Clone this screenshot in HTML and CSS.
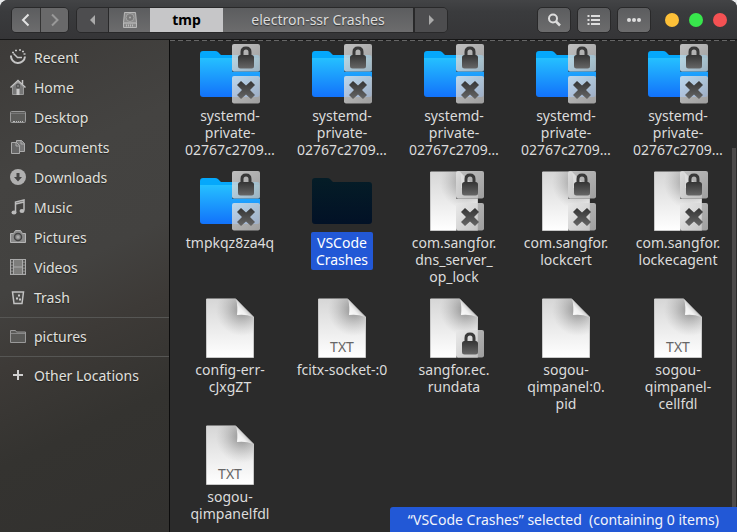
FILE: index.html
```
<!DOCTYPE html>
<html lang="en">
<head>
<meta charset="utf-8">
<title>electron-ssr Crashes</title>
<link rel="stylesheet" href="styles.css">
</head>
<body>
<svg class="defs" aria-hidden="true">
  <defs>
    <linearGradient id="blue" x1="0" y1="0" x2="0" y2="1"><stop offset="0" stop-color="#25c0ff"/><stop offset="1" stop-color="#1272fb"/></linearGradient>
    <linearGradient id="navy" x1="0" y1="0" x2="0" y2="1"><stop offset="0" stop-color="#051d27"/><stop offset="1" stop-color="#021126"/></linearGradient>
    <linearGradient id="paper" x1="0" y1="0" x2="0" y2="1"><stop offset="0" stop-color="#d6d6d6"/><stop offset="1" stop-color="#ffffff"/></linearGradient>
    <radialGradient id="shade" gradientUnits="userSpaceOnUse" cx="42" cy="12" r="26"><stop offset="0" stop-color="#555" stop-opacity=".6"/><stop offset=".5" stop-color="#777" stop-opacity=".3"/><stop offset="1" stop-color="#999" stop-opacity="0"/></radialGradient>
    <linearGradient id="curl" x1="0" y1="1" x2=".6" y2=".4"><stop offset="0" stop-color="#fff"/><stop offset=".6" stop-color="#f0f0f0"/><stop offset="1" stop-color="#bbb"/></linearGradient>
    <linearGradient id="tile" x1="0" y1="0" x2="1" y2="1"><stop offset="0" stop-color="#e8e8e8" stop-opacity=".78"/><stop offset="1" stop-color="#b4b4b4" stop-opacity=".84"/></linearGradient>
    <linearGradient id="ink" x1="0" y1="0" x2="0" y2="1"><stop offset="0" stop-color="#353535"/><stop offset="1" stop-color="#666"/></linearGradient>
    <symbol id="folder" viewBox="0 0 60 60">
      <path d="M0 10q0-3 3-3h12q2 0 3 1l3 3h36q3 0 3 3v36H0z" fill="#05a8fb"/>
      <path d="M0 14h60v36q0 3-3 3H3q-3 0-3-3z" fill="url(#blue)"/>
    </symbol>
    <symbol id="folder-selected" viewBox="0 0 60 60">
      <path d="M0 10q0-3 3-3h12q2 0 3 1l3 3h36q3 0 3 3v36q0 3-3 3H3q-3 0-3-3z" fill="url(#navy)"/>
    </symbol>
    <symbol id="file" viewBox="0 0 60 60">
      <path d="M6.500.500h29l18 18v41h-47z" fill="url(#paper)"/>
      <path d="M6.500.500h29l18 18v41h-47z" fill="url(#shade)"/>
      <path d="M36 1q2 7 1 16 9-1 16 2z" fill="url(#curl)"/>
      <path d="M6.500 1v58.500h47V19" fill="none" stroke="#c9c9c9"/>
    </symbol>
    <symbol id="lock" viewBox="0 0 28 28">
      <path d="M0 25.500q0 2.500 2 2.500h24q2 0 2-2V3" fill="none" stroke="#222" stroke-opacity=".7"/>
      <rect width="28" height="27.500" rx="2" fill="url(#tile)"/>
      <path d="M10 13V8q0-4 4-4t4 4v5" fill="none" stroke="#393939" stroke-width="3"/>
      <rect x="6" y="11" width="16" height="13.500" rx="2.500" fill="url(#ink)"/>
    </symbol>
    <symbol id="deny" viewBox="0 0 28 28">
      <path d="M0 25.500q0 2.500 2 2.500h24q2 0 2-2V3" fill="none" stroke="#222" stroke-opacity=".7"/>
      <rect width="28" height="27.500" rx="2" fill="url(#tile)"/>
      <path d="M9 5l5 4.500L19 5l4 4-5 5 5 5-4 4-5-4.500L9 23l-4-4 5-5-5-5z" fill="url(#ink)"/>
    </symbol>
  </defs>
</svg>
<div class="window">
  <header class="bar">
    <div class="group">
      <button class="btn nav" aria-label="Back"><svg width="12" height="14" viewBox="0 0 12 14"><path d="M8.500 1.500L3 7l5.500 5.500" fill="none" stroke="#e2e2e2" stroke-width="2"/></svg></button>
      <button class="btn nav" aria-label="Forward"><svg width="12" height="14" viewBox="0 0 12 14"><path d="M3 1.500L8.500 7 3 12.500" fill="none" stroke="#999" stroke-width="2"/></svg></button>
    </div>
    <nav class="group path" aria-label="Location">
      <button class="btn dim arrow" aria-label="Scroll left"><svg width="6" height="12" viewBox="0 0 6 12"><path d="M5 1v10L0 6z" fill="#aaa"/></svg></button>
      <button class="btn disk" aria-label="File system"><svg width="16" height="18" viewBox="0 0 16 18"><path d="M2.500 1.500h11l1 10v5h-13v-5z" fill="#8a8a8a" stroke="#b8b8b8"/><circle cx="8" cy="6.500" r="4" fill="#7a7a7a" stroke="#a5a5a5"/><circle cx="8" cy="6.500" r="1" fill="#b0b0b0"/><path d="M1.500 12h13" stroke="#c4c4c4"/><path d="M4.500 13.500v2m2-2v2m2-2v2m2-2v2" stroke="#bbb"/></svg></button>
      <button class="btn current">tmp</button>
      <button class="btn crumb">electron-ssr Crashes</button>
      <button class="btn dim arrow" aria-label="Scroll right"><svg width="6" height="12" viewBox="0 0 6 12"><path d="M1 1v10l5-5z" fill="#aaa"/></svg></button>
    </nav>
    <div class="tools">
      <button class="btn tool" aria-label="Search"><svg width="16" height="16" viewBox="0 0 16 16"><circle cx="7" cy="6.500" r="4" fill="none" stroke="#ddd" stroke-width="2"/><path d="M10 9.500l4 4" stroke="#ddd" stroke-width="2.500"/></svg></button>
      <button class="btn tool" aria-label="List view"><svg width="16" height="16" viewBox="0 0 16 16"><path d="M5 4h9M5 8h9M5 12h9" stroke="#ddd" stroke-width="2"/><path d="M1.500 4h2M1.500 8h2M1.500 12h2" stroke="#ddd" stroke-width="2"/></svg></button>
      <button class="btn tool" aria-label="Menu"><svg width="16" height="16" viewBox="0 0 16 16"><g fill="#ddd"><circle cx="3" cy="8" r="2"/><circle cx="8" cy="8" r="2"/><circle cx="13" cy="8" r="2"/></g></svg></button>
    </div>
    <div class="lights">
      <button class="light yellow" aria-label="Minimize"></button>
      <button class="light green" aria-label="Maximize"></button>
      <button class="light red" aria-label="Close"></button>
    </div>
  </header>
  <div class="body">
    <nav class="side" aria-label="Places">
      <a href="#"><svg viewBox="0 0 16 16"><path d="M1 6.500A7 7 0 1 0 15 7.500" fill="none" stroke="#c4c4c4" stroke-width="2"/><path d="M3.500 4.500L7.500 8.500H12" fill="none" stroke="#c4c4c4" stroke-width="1.500"/><path d="M2 3.500h2M5 1.500h2M9 1h2M12 2.500h2M13.500 5h2" stroke="#c4c4c4" stroke-width="1.500"/></svg>Recent</a>
      <a href="#"><svg viewBox="0 0 16 16"><path d="M2.500 8L8 3l5.500 5v7.500h-11z" fill="#777" stroke="#999"/><path d="M.5 8.500L8 1.500l7.500 7M12.500 1v4" fill="none" stroke="#c4c4c4" stroke-width="1.500"/><path d="M6.500 10h3v6h-3z" fill="#c9c9c9"/><path d="M6.500 5.500h3v3h-3z" fill="none" stroke="#555"/></svg>Home</a>
      <a href="#"><svg viewBox="0 0 16 16"><rect x=".5" y="2.500" width="15" height="11" rx="1" fill="#5c5c5a" stroke="#999"/><path d="M1 4.500h14" stroke="#777"/><path d="M3 12.500h2m1 0h1m1 0h1m1 0h1m1 0h1" stroke="#bbb"/></svg>Desktop</a>
      <a href="#"><svg viewBox="0 0 16 16"><path d="M6.500 1.500h5l3 3v8h-8z" fill="#777" stroke="#aaa"/><path d="M11 1v4h4" fill="none" stroke="#aaa"/><path d="M1.500 3.500h5l3 3v8h-8z" fill="#666" stroke="#aaa"/><path d="M6 3v4h4" fill="none" stroke="#aaa"/></svg>Documents</a>
      <a href="#"><svg viewBox="0 0 16 16"><circle cx="8" cy="8" r="8" fill="#b0b0b0"/><path d="M6.500 4h3v4H12l-4 4.500L4 8h2.500z" fill="#444"/></svg>Downloads</a>
      <a href="#"><svg viewBox="0 0 16 16"><path d="M5.500 13V3l8.500-2v10.500M5.500 5L14 3" fill="none" stroke="#bbb" stroke-width="1.500"/><ellipse cx="4" cy="13.500" rx="2.500" ry="2" fill="#bbb"/><ellipse cx="12" cy="12" rx="2.500" ry="2" fill="#bbb"/></svg>Music</a>
      <a href="#"><svg viewBox="0 0 16 16"><path d="M.5 4.500h3l2-3h5l2 3h3v9H.5z" fill="#8a8a8a" stroke="#b5b5b5"/><circle cx="8" cy="8" r="3.500" fill="#888" stroke="#444" stroke-width="1.500"/><circle cx="8" cy="8" r="1.500" fill="#aaa"/></svg>Pictures</a>
      <a href="#"><svg viewBox="0 0 16 16"><rect x=".5" y=".5" width="15" height="15" fill="#7d7d7b" stroke="#aaa"/><path d="M2 1v14M14 1v14" stroke="#444" stroke-width="1.500" stroke-dasharray="1.500 1.500"/><path d="M3.500 1v14M12.500 1v14M4 8h8" stroke="#aaa"/></svg>Videos</a>
      <a href="#"><svg viewBox="0 0 16 16"><path d="M2.500 3h11L12 14.500H4z" fill="#4c4c4a" stroke="#c2c2c2" stroke-width="1.500"/><path d="M8 5.500h2v2H8zm-2 3h2v2H6zm3 1h2v2H9z" fill="#c9c9c9"/></svg>Trash</a>
      <hr>
      <a href="#"><svg viewBox="0 0 16 16"><path d="M.5 2.500h5l1 1.500h9v10.500H.5z" fill="#5a5a58" stroke="#999"/><path d="M1 5.500h14" stroke="#888"/></svg>pictures</a>
      <hr>
      <a href="#"><svg viewBox="0 0 16 16"><path d="M8 3v10M3 8h10" stroke="#d0d0d0" stroke-width="2"/></svg>Other Locations</a>
    </nav>
    <main class="files">
      <div class="item"><svg class="pic" viewBox="0 0 60 60"><use href="#folder"/><use href="#lock" x="32" width="28" height="28"/><use href="#deny" x="32" y="32" width="28" height="28"/></svg><span class="name">systemd-<br>private-<br>02767c2709…</span></div>
      <div class="item"><svg class="pic" viewBox="0 0 60 60"><use href="#folder"/><use href="#lock" x="32" width="28" height="28"/><use href="#deny" x="32" y="32" width="28" height="28"/></svg><span class="name">systemd-<br>private-<br>02767c2709…</span></div>
      <div class="item"><svg class="pic" viewBox="0 0 60 60"><use href="#folder"/><use href="#lock" x="32" width="28" height="28"/><use href="#deny" x="32" y="32" width="28" height="28"/></svg><span class="name">systemd-<br>private-<br>02767c2709…</span></div>
      <div class="item"><svg class="pic" viewBox="0 0 60 60"><use href="#folder"/><use href="#lock" x="32" width="28" height="28"/><use href="#deny" x="32" y="32" width="28" height="28"/></svg><span class="name">systemd-<br>private-<br>02767c2709…</span></div>
      <div class="item"><svg class="pic" viewBox="0 0 60 60"><use href="#folder"/><use href="#lock" x="32" width="28" height="28"/><use href="#deny" x="32" y="32" width="28" height="28"/></svg><span class="name">systemd-<br>private-<br>02767c2709…</span></div>
      <div class="item"><svg class="pic" viewBox="0 0 60 60"><use href="#folder"/><use href="#lock" x="32" width="28" height="28"/><use href="#deny" x="32" y="32" width="28" height="28"/></svg><span class="name">tmpkqz8za4q</span></div>
      <div class="item"><svg class="pic" viewBox="0 0 60 60"><use href="#folder-selected"/></svg><span class="name selected">VSCode<br>Crashes</span></div>
      <div class="item"><svg class="pic" viewBox="0 0 60 60"><use href="#file"/><use href="#lock" x="32" width="28" height="28"/><use href="#deny" x="32" y="32" width="28" height="28"/></svg><span class="name">com.sangfor.<br>dns_server_<br>op_lock</span></div>
      <div class="item"><svg class="pic" viewBox="0 0 60 60"><use href="#file"/><use href="#lock" x="32" width="28" height="28"/><use href="#deny" x="32" y="32" width="28" height="28"/></svg><span class="name">com.sangfor.<br>lockcert</span></div>
      <div class="item"><svg class="pic" viewBox="0 0 60 60"><use href="#file"/><use href="#lock" x="32" width="28" height="28"/><use href="#deny" x="32" y="32" width="28" height="28"/></svg><span class="name">com.sangfor.<br>lockecagent</span></div>
      <div class="item"><svg class="pic" viewBox="0 0 60 60"><use href="#file"/></svg><span class="name">config-err-<br>cJxgZT</span></div>
      <div class="item"><svg class="pic" viewBox="0 0 60 60"><use href="#file"/><text class="kind" x="30" y="54">TXT</text></svg><span class="name">fcitx-socket-:0</span></div>
      <div class="item"><svg class="pic" viewBox="0 0 60 60"><use href="#file"/><use href="#lock" x="32" y="32" width="28" height="28"/></svg><span class="name">sangfor.ec.<br>rundata</span></div>
      <div class="item"><svg class="pic" viewBox="0 0 60 60"><use href="#file"/></svg><span class="name">sogou-<br>qimpanel:0.<br>pid</span></div>
      <div class="item"><svg class="pic" viewBox="0 0 60 60"><use href="#file"/><text class="kind" x="30" y="54">TXT</text></svg><span class="name">sogou-<br>qimpanel-<br>cellfdl</span></div>
      <div class="item"><svg class="pic" viewBox="0 0 60 60"><use href="#file"/><text class="kind" x="30" y="54">TXT</text></svg><span class="name">sogou-<br>qimpanelfdl</span></div>
    </main>
    <div class="thumb"></div>
    <div class="status" role="status">“VSCode Crashes” selected&nbsp; (containing 0 items)</div>
  </div>
</div>
</body>
</html>
```
FILE: styles.css
```
* { box-sizing: border-box; }
body {
  margin: 0;
  background: #e8eaec;
  font: 14px/17px "Noto Sans", "Open Sans", sans-serif;
  color: #dcdcdc;
}
.defs { position: absolute; width: 0; height: 0; }
.window {
  display: flex;
  flex-direction: column;
  height: 100vh;
  overflow: hidden;
  border-radius: 8px 8px 0 0;
  background: #2b2b2b;
}
.bar {
  display: flex;
  flex: none;
  align-items: center;
  height: 40px;
  padding: 0 10px 0 11px;
  background: linear-gradient(#434446, #3a3b3d 30%, #353537);
  border-bottom: 1px solid #161616;
}
.group { display: flex; border-radius: 5px; overflow: hidden; border: 1px solid #29292a; }
.btn {
  display: flex;
  align-items: center;
  justify-content: center;
  height: 24px;
  padding: 0;
  border: 0;
  background: linear-gradient(#5c5d5f, #6c6c6d);
  color: #dcdcdc;
  font: inherit;
}
.nav { width: 28px; }
.nav + .nav { border-left: 1px solid #333; background: #69696a; }
.path { margin-left: 7px; }
.btn.dim { background: #4d4d4f; }
.arrow { width: 32px; }
.arrow:first-child { border-right: 1px solid #29292a; }
.arrow:last-child { border-left: 2px solid #29292a; width: 34px; }
.disk { width: 41px; }
.current { width: 73px; background: #c6c6c8; color: #000; font-weight: 700; }
.crumb { width: 190px; text-shadow: 0 1px 1px #333; }
.tools { display: flex; gap: 6px; margin-left: auto; }
.tool { width: 34px; height: 26px; border: 1px solid #29292a; border-radius: 5px; }
.lights { display: flex; gap: 10px; margin-left: 14px; }
.light { width: 14px; height: 14px; padding: 0; border: 0; border-radius: 50%; }
.yellow { background: #fdc038; }
.green { background: #38e64c; }
.red { background: #f45153; }
.body { position: relative; display: flex; flex: 1; min-height: 0; }
.side {
  flex: none;
  width: 170px;
  padding-top: 2px;
  border-right: 1px solid #0c0c0c;
  background: linear-gradient(155deg, #3d3b39, #444341 25%, #434240 45%, #3d3a37 58%, #343330 75%, #32312f);
}
.side a {
  display: flex;
  align-items: center;
  gap: 8px;
  height: 30px;
  padding-left: 10px;
  color: #e0e0de;
  text-decoration: none;
  text-shadow: 0 1px 1px #222;
}
.side svg { width: 16px; height: 16px; }
.side hr { height: 1px; margin: 5px 0 3px; border: 0; background: #565654; }
.files {
  display: grid;
  flex: 1;
  grid-template-columns: repeat(auto-fill, 112px);
  align-content: start;
  row-gap: 11px;
  padding: 4px 0 0 4px;
  overflow: hidden;
  background: repeating-linear-gradient(90deg, #666 0 5px, #222 5px 8px) top / 100% 1px no-repeat;
}
.item { display: flex; flex-direction: column; align-items: center; gap: 1px; }
.pic { width: 60px; height: 60px; }
.name { padding: 2px 5px; border-radius: 2px; text-align: center; white-space: nowrap; }
.selected { background: #2258d6; color: #fff; }
.kind { font-size: 14px; fill: #666; text-anchor: middle; }
.thumb { position: absolute; top: 108px; right: 1px; bottom: 0; width: 4px; background: #4c4a4a; }
.status {
  position: absolute;
  right: 0;
  bottom: 0;
  padding: 4px 18px;
  border-top-left-radius: 3px;
  background: #2258d6;
  color: #f2f4fa;
}
```
